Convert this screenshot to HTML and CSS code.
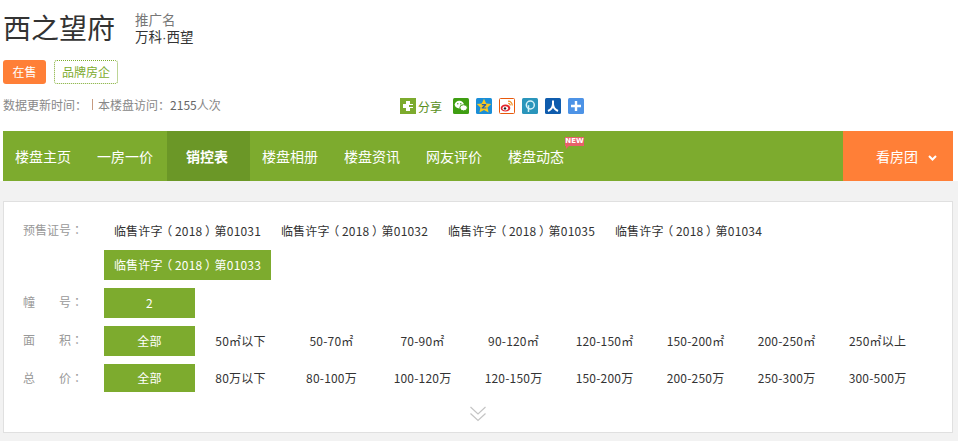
FILE: index.html
```html
<!DOCTYPE html>
<html lang="zh-CN">
<head>
<meta charset="utf-8">
<title>西之望府</title>
<link rel="stylesheet" href="styles.css">
</head>
<body>
<header class="head">
  <div class="title-row">
    <h1 class="name">西之望府</h1>
    <div class="alias"><span class="alias-label">推广名</span><span class="alias-value">万科<span class="dot">·</span>西望</span></div>
  </div>
  <div class="tags"><span class="tag tag-sale">在售</span><span class="tag tag-brand">品牌房企</span></div>
  <div class="meta">
    <div class="stats"><span>数据更新时间<span class="fw">：</span></span><i class="sep"></i><span>本楼盘访问<span class="fw">：</span><b class="count">2155</b>人次</span></div>
    <div class="share">
      <svg class="ico-plus" width="16" height="16" viewBox="0 0 16 16"><rect width="16" height="16" fill="#7dab2e"/><path d="M6 3h4v3h3v4h-3v3H6v-3H3V6h3z" fill="#fff"/><rect x="9" y="7" width="4" height="2" fill="#7dab2e"/></svg>
      <span class="share-text">分享</span>
      <div class="share-icons">
        <svg width="16" height="16" viewBox="0 0 16 16"><rect width="16" height="16" rx="1.5" fill="#3f9e12"/><ellipse cx="6.3" cy="6.6" rx="4.6" ry="3.8" fill="#fff"/><ellipse cx="10.6" cy="9.8" rx="3.8" ry="3.1" fill="#fff" stroke="#3f9e12"/><circle cx="4.8" cy="5.8" r=".7" fill="#3f9e12"/><circle cx="7.8" cy="5.8" r=".7" fill="#3f9e12"/></svg>
        <svg width="16" height="16" viewBox="0 0 16 16"><rect width="16" height="16" rx="1.5" fill="#1a8ed8"/><path d="M8 .8l2.200 4.600 5 .6-3.700 3.400 1.100 5L8 12l-4.600 2.400 1.100-5L.8 6l5-.6z" fill="#fbc91e"/><path d="M5.800 6h4.400v1.200L7.700 9.400h2.600v1.200H5.700V9.400l2.500-2.200H5.800z" fill="#2b62a8"/></svg>
        <svg width="16" height="16" viewBox="0 0 16 16"><rect x=".5" y=".5" width="15" height="15" rx="1" fill="#fff" stroke="#e8590c"/><ellipse cx="6.500" cy="10" rx="4.800" ry="3.600" fill="#e2232b"/><ellipse cx="6.300" cy="10.300" rx="2.800" ry="2.100" fill="#fff"/><circle cx="6" cy="10.400" r="1.200" fill="#222"/><path d="M9 3.200a4 4 0 0 1 4.200 4.300M9.200 5.300a2 2 0 0 1 2 2.100" fill="none" stroke="#f08a1d" stroke-width="1.200"/></svg>
        <svg width="16" height="16" viewBox="0 0 16 16"><rect width="16" height="16" rx="1.500" fill="#2a95bb"/><circle cx="8.300" cy="7" r="4" fill="none" stroke="#d5f0f7" stroke-width="1.500"/><path d="M6.500 14V7.200" stroke="#d5f0f7" stroke-width="1.500"/></svg>
        <svg width="16" height="16" viewBox="0 0 16 16"><rect width="16" height="16" rx="1.500" fill="#0f5cad"/><path d="M8 2.500v3.500C7.800 9 5.800 11.800 3 13M8 6c.2 3 2.200 5.800 5 7" fill="none" stroke="#fff" stroke-width="2"/></svg>
        <svg width="16" height="16" viewBox="0 0 16 16"><rect width="16" height="16" rx="1.500" fill="#4d93e6"/><path d="M6.800 3h2.400v3.800H13v2.400H9.200V13H6.800V9.200H3V6.800h3.800z" fill="#fff"/></svg>
      </div>
    </div>
  </div>
</header>
<nav class="nav">
  <a class="nav-item">楼盘主页</a>
  <a class="nav-item">一房一价</a>
  <a class="nav-item is-active">销控表</a>
  <a class="nav-item">楼盘相册</a>
  <a class="nav-item">楼盘资讯</a>
  <a class="nav-item">网友评价</a>
  <a class="nav-item">楼盘动态<span class="new">NEW</span></a>
  <a class="nav-tour">看房团<svg class="tour-arrow" width="9" height="6" viewBox="0 0 9 6"><path d="M1 1l3.500 3.500L8 1" fill="none" stroke="#fff" stroke-width="2"/></svg></a>
</nav>
<main class="main">
  <section class="card">
    <div class="row">
      <div class="label"><span class="label-name">预售证号</span><span class="fw">：</span></div>
      <ul class="opts">
        <li class="opt opt-wide">临售许字<span class="paren">（</span>2018<span class="paren">）</span>第01031</li>
        <li class="opt opt-wide">临售许字<span class="paren">（</span>2018<span class="paren">）</span>第01032</li>
        <li class="opt opt-wide">临售许字<span class="paren">（</span>2018<span class="paren">）</span>第01035</li>
        <li class="opt opt-wide">临售许字<span class="paren">（</span>2018<span class="paren">）</span>第01034</li>
        <li class="opt opt-wide is-on">临售许字<span class="paren">（</span>2018<span class="paren">）</span>第01033</li>
      </ul>
    </div>
    <div class="row">
      <div class="label"><span class="label-name"><span>幢</span><span>号</span></span><span class="fw">：</span></div>
      <ul class="opts"><li class="opt is-on">2</li></ul>
    </div>
    <div class="row">
      <div class="label"><span class="label-name"><span>面</span><span>积</span></span><span class="fw">：</span></div>
      <ul class="opts">
        <li class="opt is-on">全部</li><li class="opt">50㎡以下</li><li class="opt">50-70㎡</li><li class="opt">70-90㎡</li><li class="opt">90-120㎡</li><li class="opt">120-150㎡</li><li class="opt">150-200㎡</li><li class="opt">200-250㎡</li><li class="opt">250㎡以上</li>
      </ul>
    </div>
    <div class="row row-price">
      <div class="label"><span class="label-name"><span>总</span><span>价</span></span><span class="fw">：</span></div>
      <ul class="opts">
        <li class="opt is-on">全部</li><li class="opt">80万以下</li><li class="opt">80-100万</li><li class="opt">100-120万</li><li class="opt">120-150万</li><li class="opt">150-200万</li><li class="opt">200-250万</li><li class="opt">250-300万</li><li class="opt">300-500万</li>
      </ul>
    </div>
    <div class="more"><svg width="16" height="16" viewBox="0 0 16 16"><path d="M.5 1L8 8l7.500-7M.5 7.500L8 14.500l7.500-7" fill="none" stroke="#c4c4c4" stroke-width="1.200"/></svg></div>
  </section>
</main>
</body>
</html>
```
FILE: styles.css
```css
* { box-sizing: border-box; }
html, body { height: 100%; }
body {
  margin: 0;
  display: flex;
  flex-direction: column;
  background: #fff;
  color: #333;
  font-family: "Noto Sans CJK SC", "Liberation Sans", sans-serif;
  font-size: 12px;
  overflow: hidden;
}
.fw { font-family: "Noto Sans CJK TC", sans-serif; }
.paren { font-feature-settings: "palt"; padding: 0 3px; }
.head { height: 131px; padding: 8px 0 0 3px; flex: none; }
.title-row { display: flex; align-items: flex-start; height: 41px; }
.name { margin: 0; width: 132px; font-size: 28px; line-height: 38px; font-weight: 400; color: #333; }
.alias { display: flex; flex-direction: column; font-size: 13.5px; line-height: 17px; margin-top: 3px; }
.alias-label { color: #777; }
.alias-value { color: #333; }
.dot { font-family: "Liberation Sans", sans-serif; }
.tags { display: flex; gap: 8px; margin-top: 11px; }
.tag { height: 24px; line-height: 24px; text-align: center; border-radius: 3px; font-size: 12px; }
.tag-sale { width: 43px; background: #ff7f37; color: #fff; }
.tag-brand { width: 64px; line-height: 22px; border: 1px dotted #7dab2e; color: #7dab2e; }
.meta { display: flex; align-items: center; height: 16px; margin-top: 14px; color: #888; }
.stats { display: flex; align-items: center; width: 397px; margin-top: -3px; }
.sep { width: 1px; height: 11px; margin: 0 5px; background: #c79b80; }
.count { font-weight: 400; color: #666; }
.share { display: flex; align-items: center; }
.share-text { margin-left: 2px; color: #5a8f1c; font-size: 12px; }
.share-icons { display: flex; gap: 7px; margin-left: 11px; }
.nav { display: flex; flex: none; height: 50px; margin: 0 5px 0 3px; background: #7dab2e; color: #fff; font-size: 14px; }
.nav-item { position: relative; width: 82px; padding-right: 2px; line-height: 50px; text-align: center; }
.nav-item.is-active { width: 83px; padding-right: 3px; background: #6b9727; font-weight: 700; }
.new {
  position: absolute;
  left: 69px;
  top: 6px;
  width: 19px;
  height: 9px;
  background: #e8606a;
  color: #fff;
  font: 700 7px/9px "DejaVu Sans", sans-serif;
  text-align: center;
}
.new::after {
  content: "";
  position: absolute;
  left: 1px;
  top: 9px;
  border-top: 3px solid #e8606a;
  border-right: 3px solid transparent;
}
.nav-tour {
  display: flex;
  align-items: center;
  margin-left: auto;
  width: 110px;
  padding-left: 33px;
  background: #ff7f37;
}
.tour-arrow { margin: 3px 0 0 10px; }
.main { flex: 1; background: #f2f2f2; padding: 20px 5px 0 3px; }
.card { height: 232px; background: #fff; border: 1px solid #e0e0e0; padding-top: 14px; }
.row { display: flex; margin-bottom: 8px; padding-left: 19px; }
.label { display: flex; width: 81px; height: 30px; line-height: 27px; color: #999; }
.label-name { display: flex; justify-content: space-between; width: 48px; }
.opts { display: flex; flex-wrap: wrap; row-gap: 4px; width: 830px; margin: 0; padding: 0; list-style: none; }
.opt { width: 91px; height: 30px; line-height: 30px; text-align: center; white-space: nowrap; color: #333; letter-spacing: .2px; }
.opt-wide { width: 167px; }
.opt.is-on { background: #7dab2e; color: #fff; }
.row-price .opt { height: 28px; line-height: 28px; }
.row-price { margin-bottom: 12px; }
.more { display: flex; justify-content: center; height: 16px; }
```
